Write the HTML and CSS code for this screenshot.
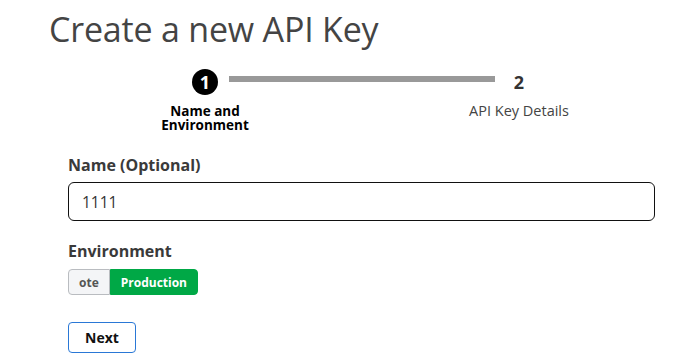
FILE: index.html
```html
<!DOCTYPE html>
<html lang="en">
<head>
    <meta charset="UTF-8">
    <meta name="viewport" content="width=device-width, initial-scale=1.0">
    <title>Create a new API Key</title>
    <link rel="stylesheet" href="styles.css">
</head>
<body>
    <div class="page">
        <h1 class="title">Create a new API Key</h1>

        <!-- Stepper -->
        <div class="stepper">
            <div class="step active">
                <span class="step-num">1</span>
                <span class="step-label">Name and Environment</span>
            </div>
            <div class="step-line"></div>
            <div class="step">
                <span class="step-num">2</span>
                <span class="step-label">API Key Details</span>
            </div>
        </div>

        <!-- Form -->
        <form class="form">
            <label class="field-label" for="keyName">Name (Optional)</label>
            <input class="text-input" type="text" id="keyName" value="1111">

            <div class="field-label">Environment</div>
            <div class="toggle">
                <button type="button" class="toggle-opt">ote</button>
                <button type="button" class="toggle-opt selected">Production</button>
            </div>

            <button type="button" class="next-btn">Next</button>
        </form>
    </div>
</body>
</html>
```

FILE: styles.css
```css
* {
    margin: 0;
    padding: 0;
    box-sizing: border-box;
}

body {
    font-family: 'Open Sans', 'Noto Sans', sans-serif;
    background: #fff;
    color: #333;
}

.page {
    padding: 9px 38px 0 49px;
}

/* Judul */
.title {
    font-size: 34px;
    font-weight: 400;
    color: #444;
    line-height: 40px;
    letter-spacing: -0.2px;
}

/* Stepper */
.stepper {
    display: flex;
    align-items: flex-start;
    margin: 20px 0 0 96px;
    width: 434px;
}

.step {
    width: 120px;
    display: flex;
    flex-direction: column;
    align-items: center;
    position: relative;
    z-index: 1;
}

.step-num {
    width: 26px;
    height: 26px;
    border-radius: 50%;
    display: flex;
    align-items: center;
    justify-content: center;
    font-size: 18px;
    font-weight: 700;
    color: #333;
}

.step.active .step-num {
    background: #000;
    color: #fff;
}

.step-label {
    margin-top: 9px;
    font-size: 14.5px;
    line-height: 14px;
    text-align: center;
    color: #444;
    width: 110px;
}

.step.active .step-label {
    font-size: 13.5px;
    font-weight: 700;
    color: #000;
}

.step-line {
    flex: 1;
    height: 6px;
    background: #999;
    margin: 7px -36px 0 -36px;
}

/* Form */
.form {
    padding-left: 19px;
    margin-top: 22px;
    display: flex;
    flex-direction: column;
    align-items: flex-start;
}

.field-label {
    font-size: 16px;
    font-weight: 700;
    color: #3a3a3a;
    line-height: 22px;
    margin-bottom: 6px;
}

.text-input {
    width: 100%;
    height: 39px;
    border: 1.5px solid #111;
    border-radius: 6px;
    padding: 0 13px;
    font-family: inherit;
    font-size: 15.5px;
    color: #333;
    margin-bottom: 19px;
    outline: none;
}

.toggle {
    display: flex;
    height: 26px;
    margin-top: 1px;
}

.toggle-opt {
    font-family: inherit;
    font-size: 12px;
    font-weight: 700;
    padding: 0 10px;
    border: 1px solid #b9bcc0;
    background: #f4f5f7;
    color: #555;
    border-radius: 4px 0 0 4px;
}

.toggle-opt.selected {
    background: #00a846;
    border-color: #00a846;
    color: #fff;
    border-radius: 0 4px 4px 0;
}

.next-btn {
    margin-top: 27px;
    width: 68px;
    height: 31px;
    background: #fff;
    border: 1px solid #2a78d6;
    border-radius: 4px;
    font-family: inherit;
    font-size: 14px;
    font-weight: 700;
    color: #111;
}
```
